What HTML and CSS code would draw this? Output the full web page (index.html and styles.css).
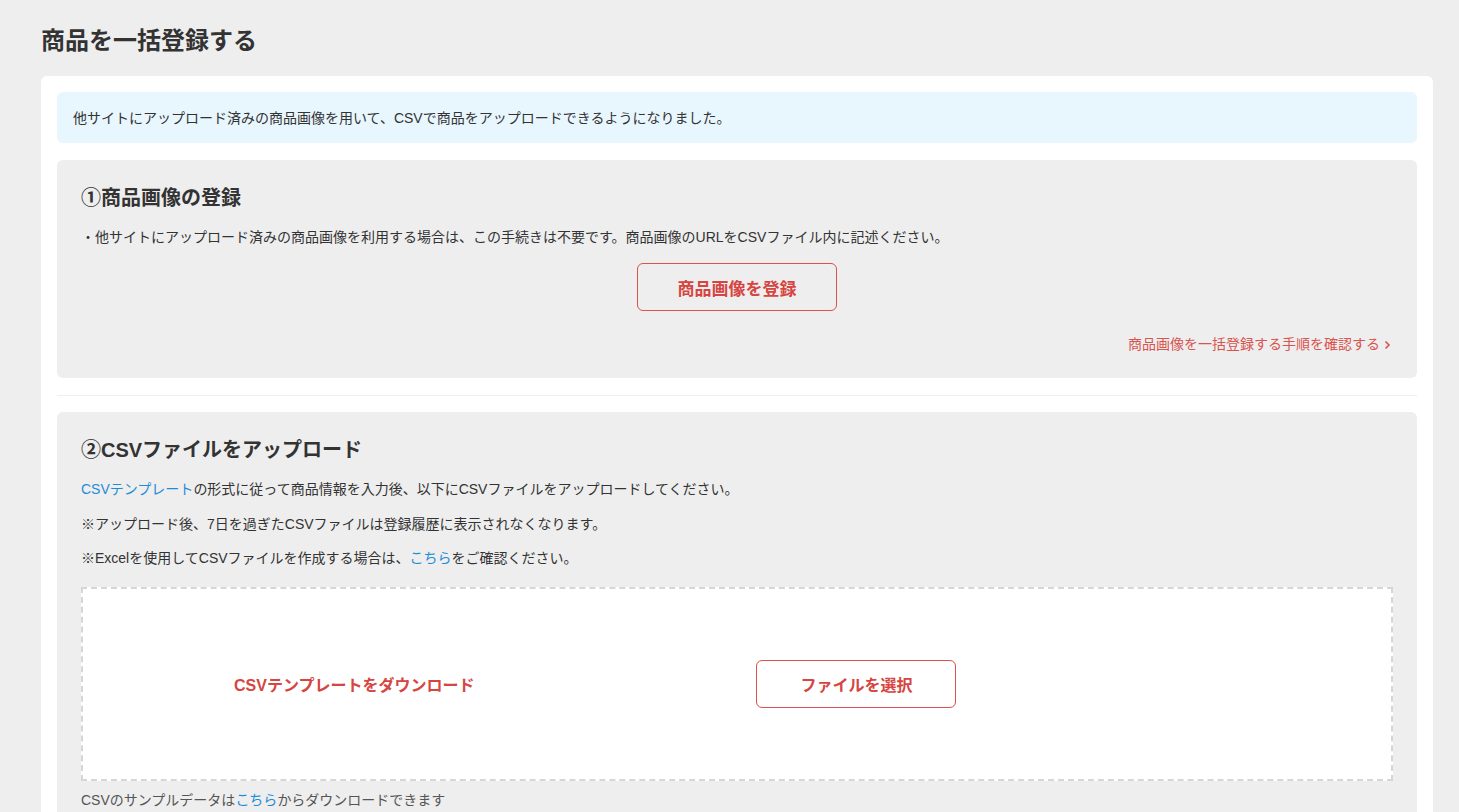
FILE: index.html
```html
<!DOCTYPE html>
<html lang="ja">
<head>
<meta charset="utf-8">
<title>商品を一括登録する</title>
<link rel="stylesheet" href="styles.css">
</head>
<body>
<main class="page">
  <h1 class="page-title">商品を一括登録する</h1>
  <div class="card">
    <div class="notice">他サイトにアップロード済みの商品画像を用いて、CSVで商品をアップロードできるようになりました。</div>

    <section class="step">
      <h2 class="step-title">①商品画像の登録</h2>
      <p class="step-text">・他サイトにアップロード済みの商品画像を利用する場合は、この手続きは不要です。商品画像のURLをCSVファイル内に記述ください。</p>
      <div class="center">
        <a class="btn" href="#">商品画像を登録</a>
      </div>
      <div class="right">
        <a class="more-link" href="#">商品画像を一括登録する手順を確認する<svg class="chev" width="7" height="10" viewBox="0 0 7 10"><path d="M1.5 1.5 L5 5 L1.5 8.5" fill="none" stroke="currentColor" stroke-width="1.6"/></svg></a>
      </div>
    </section>

    <hr class="divider">

    <section class="step">
      <h2 class="step-title">②CSVファイルをアップロード</h2>
      <p class="step-text"><a class="blue" href="#">CSVテンプレート</a>の形式に従って商品情報を入力後、以下にCSVファイルをアップロードしてください。</p>
      <p class="step-text">※アップロード後、7日を過ぎたCSVファイルは登録履歴に表示されなくなります。</p>
      <p class="step-text">※Excelを使用してCSVファイルを作成する場合は、<a class="blue" href="#">こちら</a>をご確認ください。</p>
      <div class="dropzone">
        <a class="dl-link" href="#">CSVテンプレートをダウンロード</a>
        <a class="btn btn-file" href="#">ファイルを選択</a>
      </div>
      <p class="sample">CSVのサンプルデータは<a class="blue" href="#">こちら</a>からダウンロードできます</p>
    </section>
  </div>
</main>
</body>
</html>
```

FILE: styles.css
```css
* { box-sizing: border-box; }

html, body {
  margin: 0;
  padding: 0;
  background: #eeeeee;
}

body {
  font-family: "Liberation Sans", "Noto Sans CJK JP", Arial, sans-serif;
  color: #333333;
  font-size: 14px;
}

.page {
  padding: 25px 26px 40px 41px;
}

.page-title {
  margin: 0 0 19px;
  font-size: 24px;
  line-height: 32px;
  font-weight: 700;
  color: #333333;
}

.card {
  background: #ffffff;
  border-radius: 6px;
  padding: 16px;
}

.notice {
  background: #e8f6fe;
  border-radius: 6px;
  padding: 0 16px;
  height: 51px;
  display: flex;
  align-items: center;
  font-size: 14px;
  line-height: 20px;
  color: #333333;
  margin-bottom: 17px;
}

.step {
  background: #eeeeee;
  border-radius: 6px;
  padding: 24px 24px 24px 24px;
}

.step-title {
  margin: 0;
  font-size: 20px;
  line-height: 28px;
  font-weight: 700;
  color: #333333;
}

.step-text {
  margin: 15px 0 0;
  font-size: 14px;
  line-height: 20px;
}

.step-text + .step-text {
  margin-top: 14.5px;
}

.center {
  display: flex;
  justify-content: center;
  margin-top: 16px;
}

.btn {
  display: flex;
  align-items: center;
  justify-content: center;
  width: 200px;
  height: 48px;
  border: 1px solid #d9534f;
  border-radius: 6px;
  color: #d64541;
  font-size: 17px;
  font-weight: 700;
  text-decoration: none;
  background: transparent;
}

.right {
  display: flex;
  justify-content: flex-end;
  margin-top: 23px;
  padding-right: 2px;
}

.more-link {
  display: inline-flex;
  align-items: center;
  gap: 4px;
  font-size: 14px;
  line-height: 20px;
  color: #d9534f;
  text-decoration: none;
}

.chev {
  margin-top: 2px;
}

.divider {
  border: none;
  border-top: 1px solid #eeeeee;
  margin: 17px 0 16px;
  height: 0;
}

.blue {
  color: #1f8dd6;
  text-decoration: none;
}

.dropzone {
  margin-top: 19px;
  height: 194px;
  background: #ffffff;
  border: 2px dashed #d6d6d6;
  display: flex;
  align-items: center;
  padding-left: 151px;
  gap: 282px;
}

.dl-link {
  color: #d64541;
  font-size: 16px;
  font-weight: 700;
  text-decoration: none;
  white-space: nowrap;
}

.btn-file {
  font-size: 16px;
  background: #ffffff;
}

.sample {
  margin: 9px 0 0;
  font-size: 14px;
  line-height: 20px;
  color: #555555;
}
```
